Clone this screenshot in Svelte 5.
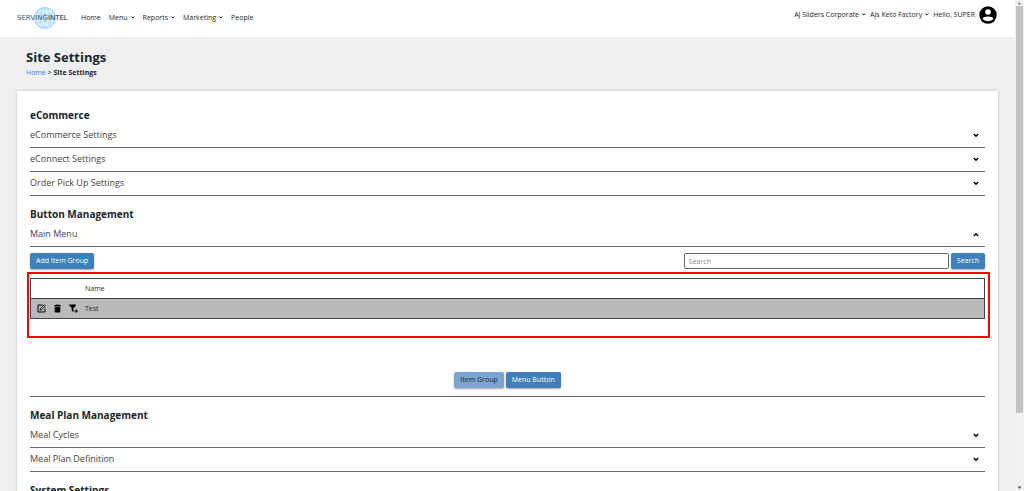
<script lang="ts">
    const nav = [
        { label: "Home", menu: false },
        { label: "Menu", menu: true },
        { label: "Reports", menu: true },
        { label: "Marketing", menu: true },
        { label: "People", menu: false },
    ]
    const accounts = ["AJ Sliders Corporate", "AJs Keto Factory"]
    const sections = [
        { title: "eCommerce", items: ["eCommerce Settings", "eConnect Settings", "Order Pick Up Settings"] },
        { title: "Button Management", items: ["Main Menu"] },
        { title: "Meal Plan Management", items: ["Meal Cycles", "Meal Plan Definition"] },
        { title: "System Settings", items: [] },
    ]
    const groups = ["Test"]

    let open = $state("Main Menu")
    let tab = $state("Item Group")
    let search = $state("")
    let shown = $derived(groups.filter((g) => g.toLowerCase().includes(search.toLowerCase())))
</script>

{#snippet caret()}
    <svg class="caret" viewBox="0 0 4 3" aria-hidden="true">
        <path d="M0.4 0.5 L2 2.1 L3.6 0.5" fill="none" stroke="currentColor" stroke-width="1" />
    </svg>
{/snippet}

<div class="window">
    <div class="page">
        <header>
            <a href="#home" class="logo" aria-label="ServingIntel">
                <svg viewBox="0 0 56 24">
                    <g fill="none" stroke="#a9dcf5" stroke-width="1">
                        <circle cx="28" cy="12" r="10.2" fill="#e2f4fd" stroke-width="1.4" />
                        <ellipse cx="28" cy="12" rx="5" ry="10" />
                        <path d="M28 2 V22 M19 7 Q28 10 37 7 M18 12 H38 M19 17 Q28 14 37 17" />
                        <path d="M20 5 L34 20 M24 3 L37 15" stroke="#c4e8f8" />
                    </g>
                    <text x="0" y="14" class="logo-text"><tspan fill="#35547c">SERVING</tspan><tspan fill="#222c38">INTEL</tspan></text>
                </svg>
            </a>
            <nav>
                {#each nav as item}
                    <a href={"#" + item.label.toLowerCase()}>
                        {item.label}
                        {#if item.menu}{@render caret()}{/if}
                    </a>
                {/each}
            </nav>
            <div class="account">
                {#each accounts as account}
                    <button class="plain">{account} {@render caret()}</button>
                {/each}
                <span>Hello, SUPER</span>
                <button class="plain avatar" aria-label="Profile">
                    <svg viewBox="0 0 18 18">
                        <circle cx="9" cy="9" r="8.7" />
                        <circle cx="9" cy="6" r="2.8" fill="#fff" />
                        <path d="M3.5 12.5 C4 9.8 14 9.8 14.5 12.5 C12.3 16.2 5.7 16.2 3.5 12.5Z" fill="#fff" />
                    </svg>
                </button>
            </div>
        </header>

        <div class="title">
            <h1>Site Settings</h1>
            <p><a href="#home">Home</a> &gt; <b>Site Settings</b></p>
        </div>

        <main>
            {#each sections as section}
                <section>
                    <h2>{section.title}</h2>
                    {#each section.items as item}
                        <button
                            class="row"
                            class:open={open === item}
                            aria-expanded={open === item}
                            onclick={() => (open = open === item ? "" : item)}
                        >
                            {item}
                            <svg class="chevron" viewBox="0 0 6 5" aria-hidden="true">
                                <path d="M0.8 1 L3 3.2 L5.2 1" fill="none" stroke="#000" stroke-width="1.5" />
                            </svg>
                        </button>
                        {#if item === "Main Menu" && open === item}
                            <div class="panel">
                                <div class="toolbar">
                                    <button class="btn">Add Item Group</button>
                                    <input type="text" placeholder="Search" aria-label="Search" bind:value={search} />
                                    <button class="btn">Search</button>
                                </div>
                                <div class="highlight">
                                    <table>
                                        <thead>
                                            <tr>
                                                <th class="actions" aria-label="Actions"></th>
                                                <th>Name</th>
                                            </tr>
                                        </thead>
                                        <tbody>
                                            {#each shown as group}
                                                <tr>
                                                    <td class="actions">
                                                        <div class="icons">
                                                            <button class="plain" aria-label="Edit">
                                                                <svg viewBox="0 0 9 9">
                                                                    <path d="M5.5 1 H1 V8 H8 V4.5" fill="none" stroke="#000" stroke-width="1" />
                                                                    <path d="M3 6.2 L3.3 4.7 L7.3 0.7 L8.5 1.9 L4.5 5.9 Z" fill="none" stroke="#000" stroke-width="0.8" />
                                                                </svg>
                                                            </button>
                                                            <button class="plain" aria-label="Delete">
                                                                <svg viewBox="0 0 9 9">
                                                                    <path d="M1.2 1 H3.2 L3.7 0.4 H5.3 L5.8 1 H7.8 V2 H1.2Z M1.7 2.4 H7.3 V7.8 Q7.3 8.6 6.5 8.6 H2.5 Q1.7 8.6 1.7 7.8Z" />
                                                                </svg>
                                                            </button>
                                                            <button class="plain" aria-label="Add filter">
                                                                <svg viewBox="0 0 9 9">
                                                                    <path d="M0.3 0.6 H6.9 V1.4 L4.5 4.2 V8.2 L2.7 6.8 V4.2 L0.3 1.4Z" />
                                                                    <path d="M7.2 5.4 V8.8 M5.5 7.1 H8.9" stroke="#000" stroke-width="1" />
                                                                </svg>
                                                            </button>
                                                        </div>
                                                    </td>
                                                    <td>{group}</td>
                                                </tr>
                                            {/each}
                                        </tbody>
                                    </table>
                                </div>
                                <div class="tabs">
                                    {#each ["Item Group", "Menu Button"] as name}
                                        <button class="btn" class:current={tab === name} onclick={() => (tab = name)}>
                                            {name}
                                        </button>
                                    {/each}
                                </div>
                            </div>
                        {/if}
                    {/each}
                </section>
            {/each}
        </main>
    </div>
    <div class="scrollbar" aria-hidden="true">
        <svg viewBox="0 0 9 6"><path d="M2.5 4.5 L4.5 2 L6.5 4.5Z" fill="#8a8a8a" /></svg>
        <div class="track"><div class="thumb"></div></div>
        <svg viewBox="0 0 9 6"><path d="M2.5 1.5 L4.5 4 L6.5 1.5Z" fill="#505050" /></svg>
    </div>
</div>

<style>
    :global(body) {
        background: #efefef;
    }
    .window {
        display: flex;
        height: 100vh;
        overflow: hidden;
        color: #212529;
        font: 7px/12px "Open Sans", "Noto Sans", sans-serif;
    }
    .page {
        flex: 1;
        min-width: 0;
        background: #efefef;
    }
    button,
    input {
        font: inherit;
        color: inherit;
    }
    button {
        cursor: pointer;
    }
    a {
        color: inherit;
        text-decoration: none;
    }
    h1,
    h2,
    p {
        margin: 0;
    }
    svg {
        display: block;
    }
    .plain {
        display: flex;
        align-items: center;
        padding: 0;
        border: 0;
        background: none;
    }
    header {
        display: flex;
        align-items: center;
        height: 37px;
        padding: 0 18px 2px 17px;
        box-sizing: border-box;
        background: #fff;
    }
    .logo {
        width: 56px;
        margin-right: 8px;
    }
    .logo-text {
        font: 7px "DejaVu Sans", sans-serif;
    }
    nav {
        display: flex;
        gap: 8px;
    }
    nav a {
        display: flex;
        align-items: center;
    }
    .caret {
        width: 4px;
        height: 3px;
        margin-left: 3px;
    }
    .account {
        display: flex;
        align-items: center;
        gap: 4px;
        margin-left: auto;
        padding-bottom: 6px;
    }
    .avatar svg {
        width: 18px;
        height: 18px;
    }
    .title {
        padding: 12px 26px;
    }
    h1 {
        margin-bottom: 2px;
        font-size: 13px;
        line-height: 16px;
    }
    .title a {
        color: #3b82f6;
    }
    main {
        margin: 0 17px;
        padding: 6px 13px 13px;
        background: #fff;
        box-shadow: 0 0 3px rgba(0, 0, 0, 0.2);
    }
    section {
        padding-top: 9px;
    }
    h2 {
        font-size: 10px;
        line-height: 18px;
    }
    .row {
        display: flex;
        align-items: center;
        justify-content: space-between;
        width: 100%;
        height: 24px;
        padding: 0 6px 1px 0;
        border: 0;
        border-bottom: 1px solid #666;
        background: none;
        font-size: 9px;
        color: #444;
    }
    .chevron {
        width: 6px;
        height: 5px;
    }
    .open .chevron {
        transform: rotate(180deg);
    }
    .panel {
        padding: 6px 0 8px;
        border-bottom: 1px solid #666;
    }
    .toolbar {
        display: flex;
        gap: 2px;
    }
    .btn {
        height: 16px;
        padding: 0 6px;
        border: 0;
        border-radius: 2px;
        background: #4080ba;
        color: #fff;
        box-shadow: 0 1px 2px rgba(0, 0, 0, 0.35);
    }
    .btn.current {
        background: #7aa6cf;
        color: #212529;
    }
    input {
        width: 265px;
        height: 16px;
        margin-left: auto;
        padding: 0 4px;
        box-sizing: border-box;
        border: 1px solid #666;
        border-radius: 2px;
    }
    input::placeholder {
        color: #888;
    }
    .highlight {
        height: 66px;
        margin: 3px -5px 0 -3px;
        padding: 4px 3px 0 1px;
        box-sizing: border-box;
        border: 2px solid #f00;
    }
    table {
        width: 100%;
        border-collapse: collapse;
    }
    tr {
        height: 20px;
        border: 1px solid #444;
    }
    th,
    td {
        padding: 0;
        text-align: left;
        font-weight: normal;
    }
    .actions {
        width: 54px;
    }
    tbody tr {
        background: #b9b9b9;
    }
    .icons {
        display: flex;
        gap: 7px;
        padding-left: 6px;
    }
    .icons svg {
        width: 9px;
        height: 9px;
    }
    .tabs {
        display: flex;
        justify-content: center;
        gap: 2px;
        margin-top: 34px;
    }
    .scrollbar {
        display: flex;
        flex-direction: column;
        width: 9px;
        background: #f1f1f1;
    }
    .track {
        flex: 1;
        padding: 0 1px;
    }
    .thumb {
        height: 85%;
        background: #c1c1c1;
    }
</style>
